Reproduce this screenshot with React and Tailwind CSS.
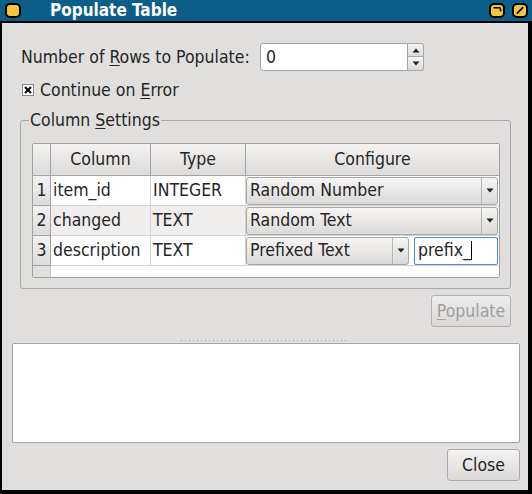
import React from "react";

const FONT = "font-['DejaVu_Sans_Condensed','DejaVu_Sans',sans-serif] [font-stretch:condensed]";

const TitleIcon = ({ glyph }) => (
  <svg width="16" height="15" viewBox="0 0 16 15">
    <rect x="1" y="1" width="14" height="13" rx="4" fill="#f7c53c" stroke="#000" strokeWidth="2" />
    {glyph === "shade" && (
      <path d="M4.5 4.8 H10 Q11.6 4.8 11.6 6.4 V8.5" fill="none" stroke="#000" strokeWidth="1.6" />
    )}
    {glyph === "max" && <path d="M4.8 10.6 L11.2 4.2" stroke="#000" strokeWidth="1.8" />}
  </svg>
);

const DownArrow = () => (
  <svg width="8" height="5" viewBox="0 0 8 5">
    <path d="M0.5 0.5 H7.5 L4 4.5 Z" fill="#1e1e1e" />
  </svg>
);

const UpArrow = () => (
  <svg width="8" height="5" viewBox="0 0 8 5">
    <path d="M0.5 4.5 H7.5 L4 0.5 Z" fill="#1e1e1e" />
  </svg>
);

const Combo = ({ label, className }) => (
  <div
    className={`h-[28px] flex border border-[#a6a6a6] rounded-[3px] bg-gradient-to-b from-[#f6f5f4] to-[#dbdad9] ${className}`}
  >
    <div className="flex-1 pl-[3px] flex items-center truncate">{label}</div>
    <div className="w-[16px] border-l border-[#b4b4b4] flex items-center justify-center">
      <DownArrow />
    </div>
  </div>
);

const rows = [
  { n: 1, name: "item_id", type: "INTEGER", conf: "Random Number" },
  { n: 2, name: "changed", type: "TEXT", conf: "Random Text" },
  { n: 3, name: "description", type: "TEXT", conf: "Prefixed Text", prefix: "prefix_" },
];

const headCls =
  "h-full flex items-center justify-center border-r border-[#a3a3a3] bg-gradient-to-b from-[#f3f2f1] to-[#dddcdb]";

export default function App() {
  return (
    <div className={`w-[532px] h-[494px] bg-black flex flex-col text-[17.5px] text-[#262626] ${FONT}`}>
      {/* title bar */}
      <div className="h-[21px] bg-[#0b5e87] flex items-center pl-[5px] pr-[4px]">
        <TitleIcon />
        <span className="ml-[29px] text-white font-bold leading-none text-[17px]">Populate Table</span>
        <div className="ml-auto flex gap-[7px]">
          <TitleIcon glyph="shade" />
          <TitleIcon glyph="max" />
        </div>
      </div>
      <div className="h-[2px]" />

      <div className="flex-1 ml-[2px] mr-[4px] mb-[4px] bg-[#e0dfdd] flex flex-col">
        {/* top part */}
        <div className="pl-[18px] pr-[17px] pt-[20px] flex flex-col">
          <div className="flex items-center h-[28px]">
            <label className="w-[240px] pl-[1px]">
              Number of <u className="underline-offset-2">R</u>ows to Populate:
            </label>
            <div className="flex h-[28px] w-[164px]">
              <div className="flex-1 bg-white border border-[#a4a4a4] rounded-l-[3px] flex items-center pl-[5px]">
                0
              </div>
              <div className="w-[16px] flex flex-col">
                <div className="h-[14px] flex items-center justify-center border border-l-0 border-[#a8a8a8] rounded-tr-[3px] bg-gradient-to-b from-[#f6f5f4] to-[#dcdbda]">
                  <UpArrow />
                </div>
                <div className="h-[14px] flex items-center justify-center border border-l-0 border-t-0 border-[#a8a8a8] rounded-br-[3px] bg-gradient-to-b from-[#f6f5f4] to-[#dcdbda]">
                  <DownArrow />
                </div>
              </div>
            </div>
          </div>

          <div className="mt-[7px] h-[24px] flex items-center pl-[2px] gap-[6px]">
            <svg width="12" height="12" viewBox="0 0 12 12">
              <rect x="0.5" y="0.5" width="11" height="11" fill="#fff" stroke="#8c8c8c" />
              <path d="M3 3 L9 9 M9 3 L3 9" stroke="#111" strokeWidth="2.2" />
            </svg>
            <span>
              Continue on <u className="underline-offset-2">E</u>rror
            </span>
          </div>

          <fieldset className="mt-[8px] border border-[#a8a8a8] rounded-[3px] pl-[11px] pr-[10px] pb-[10px]">
            <legend className="ml-[-3px] px-[1px] leading-[20px]">
              Column <u className="underline-offset-2">S</u>ettings
            </legend>

            <div className="mt-[13px] h-[135px] border border-[#a0a0a0] rounded-[2px] bg-white flex flex-col overflow-hidden">
              <div className="h-[32px] flex border-b border-[#a3a3a3]">
                <div className={`w-[18px] ${headCls}`} />
                <div className={`w-[100px] ${headCls}`}>Column</div>
                <div className={`w-[95px] ${headCls}`}>Type</div>
                <div className={`flex-1 ${headCls} border-r-0`}>Configure</div>
              </div>

              {rows.map((r) => (
                <div
                  key={r.n}
                  className={`h-[30px] flex border-b border-[#d4d4d4] ${r.n === 2 ? "bg-[#efeeed]" : "bg-white"}`}
                >
                  <div className="w-[18px] -mb-px flex items-center justify-center border-r border-b border-[#a3a3a3] bg-gradient-to-b from-[#f3f2f1] to-[#dddcdb]">
                    {r.n}
                  </div>
                  <div className="w-[100px] pl-[2px] flex items-center border-r border-[#d4d4d4]">{r.name}</div>
                  <div className="w-[95px] pl-[2px] flex items-center border-r border-[#d4d4d4]">{r.type}</div>
                  <div className="flex-1 flex items-center pr-[1px]">
                    {r.prefix ? (
                      <>
                        <Combo label={r.conf} className="w-[163px]" />
                        <div className="ml-[5px] h-[28px] flex-1 bg-white border border-[#3f8fdc] rounded-[2px] flex items-center pl-[3px]">
                          {r.prefix}
                          <span className="w-px h-[19px] bg-black" />
                        </div>
                      </>
                    ) : (
                      <Combo label={r.conf} className="flex-1" />
                    )}
                  </div>
                </div>
              ))}

              <div className="flex-1 flex">
                <div className="w-[18px] bg-[#e0dfdd] border-r border-[#c8c8c8]" />
                <div className="flex-1" />
              </div>
            </div>
          </fieldset>

          <button className="self-end mt-[6px] h-[32px] w-[80px] border border-[#b0b0b0] rounded-[3px] bg-gradient-to-b from-[#eeedec] to-[#d9d8d7] text-[#9f9f9f]">
            <u className="underline-offset-2">P</u>opulate
          </button>
        </div>

        {/* splitter handle */}
        <div className="h-[16px] flex items-end justify-center pb-[2px]">
          <div className="flex gap-[3px] ml-[-4px]">
            {Array.from({ length: 42 }).map((_, i) => (
              <span key={i} className="w-px h-px bg-[#9a9a9a]" />
            ))}
          </div>
        </div>

        {/* bottom part */}
        <div className="pl-[10px] pr-[8px] flex flex-col">
          <div className="h-[100px] bg-white border border-[#a4a4a4] rounded-[2px]" />
          <button className="self-end mt-[6px] h-[32px] w-[73px] border border-[#a8a8a8] rounded-[3px] bg-gradient-to-b from-[#f4f3f2] to-[#dbdad9]">
            Close
          </button>
        </div>
      </div>
    </div>
  );
}
